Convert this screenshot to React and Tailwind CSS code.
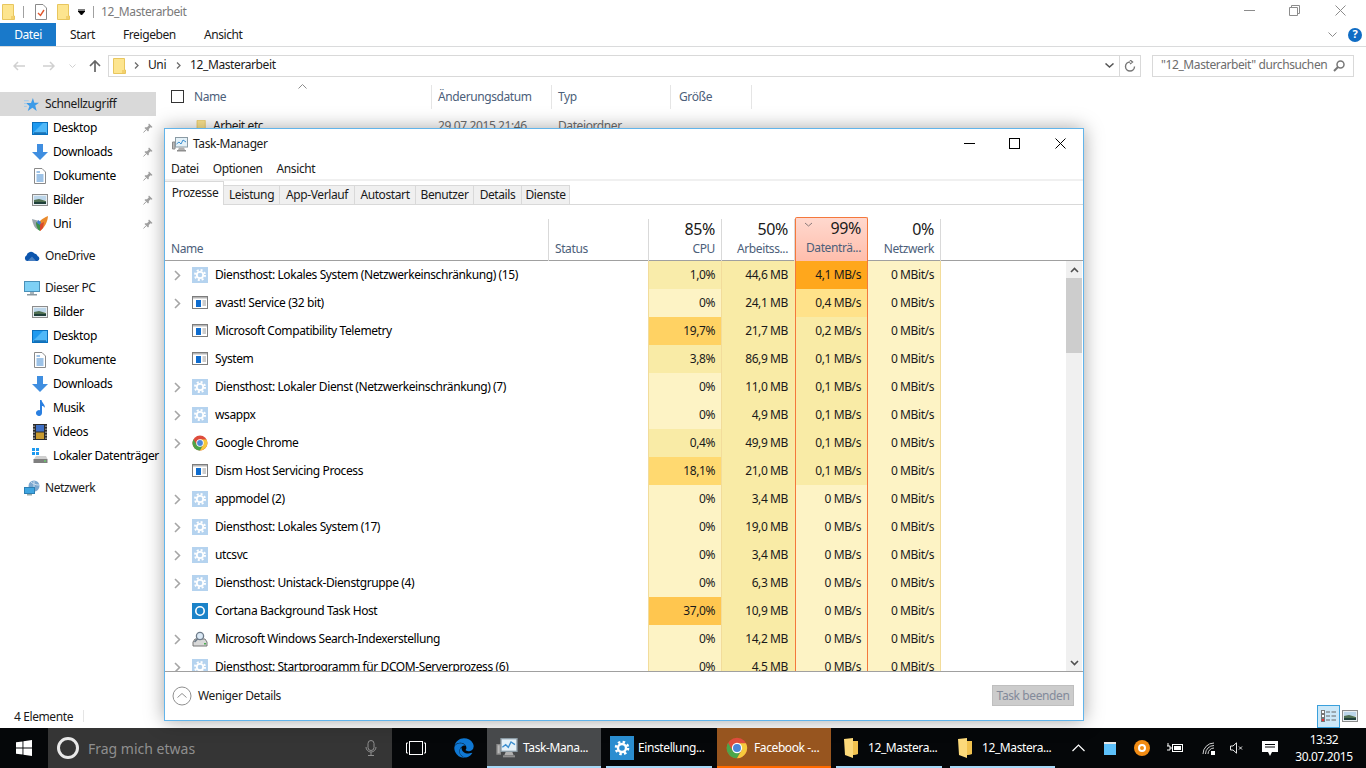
import { FaEdge } from "react-icons/fa";

const FolderIcon = ({ className = "w-[13px] h-[16px]" }) => (
  <svg viewBox="0 0 13 16" className={className}>
    <path d="M0.5 0.5H11.5V12H12.5V15.5H0.5Z" fill="#fde58f" stroke="#e8c65e" />
    <rect x="9" y="12" width="3" height="3" fill="#f3d06c" />
  </svg>
);

const ChromeIcon = ({ size = 16 }) => (
  <svg viewBox="0 0 32 32" width={size} height={size}>
    <circle cx="16" cy="16" r="15" fill="#de4c3c" />
    <path d="M16 16L3 23.5A15 15 0 0 1 3 8.5L9 19Z" fill="#4aa64a" />
    <path d="M16 16L3 23.5A15 15 0 0 0 16 31L23 18Z" fill="#4aa64a" />
    <path d="M16 9H29A15 15 0 0 1 16 31L23 19Z" fill="#f6c93c" />
    <circle cx="16" cy="16" r="7.5" fill="#fff" />
    <circle cx="16" cy="16" r="5.8" fill="#4a86d8" />
  </svg>
);

const GearIcon = () => (
  <svg viewBox="0 0 16 16" className="w-4 h-4">
    <rect width="16" height="16" fill="#b5d3ef" />
    <circle cx="8" cy="8" r="5" fill="none" stroke="#fff" strokeWidth="2" strokeDasharray="2 1.93" />
    <circle cx="8" cy="8" r="3.2" fill="none" stroke="#fff" strokeWidth="1.8" />
  </svg>
);

const WindowIcon = () => (
  <svg viewBox="0 0 16 14" className="w-4 h-[14px]">
    <rect x="0.5" y="0.5" width="15" height="12" fill="#fff" stroke="#7d7d7d" />
    <rect x="1" y="1" width="14" height="1.5" fill="#b5b5b5" />
    <rect x="4" y="4" width="5" height="7" fill="#0e6ccf" />
    <path d="M10.5 5H14M10.5 7H14M10.5 9H14" stroke="#9a9a9a" />
  </svg>
);

const CortanaIcon = () => (
  <svg viewBox="0 0 16 16" className="w-4 h-4">
    <rect width="16" height="16" fill="#1b83c9" />
    <circle cx="8" cy="8" r="4.2" fill="none" stroke="#fff" strokeWidth="1.6" />
  </svg>
);

const SearchIndexIcon = () => (
  <svg viewBox="0 0 16 16" className="w-4 h-4">
    <path d="M1 11L3 8H13L15 11V15H1Z" fill="#d9d9d9" stroke="#777" />
    <rect x="12" y="12" width="2" height="1.5" fill="#4caf50" />
    <circle cx="8" cy="5" r="3.6" fill="#dbe9f5" stroke="#6c7a88" strokeWidth="1.3" />
    <path d="M5.5 8L2.5 11" stroke="#6c7a88" strokeWidth="1.6" />
  </svg>
);

const PinIcon = () => (
  <svg viewBox="0 0 10 10" className="w-[10px] h-[10px]">
    <path d="M6 0.5L9.5 4L8.5 4.7L7.6 4.2L5.8 6L5.8 7.8L5 8.5L1.5 5L2.2 4.2L4 4.2L5.8 2.4L5.3 1.5Z" fill="#a2a2a2" />
    <path d="M3 6.8L0.5 9.5" stroke="#a2a2a2" />
  </svg>
);

const DesktopIcon = () => (
  <svg viewBox="0 0 16 13" className="w-4 h-[13px]">
    <rect x="0.5" y="0.5" width="15" height="12" fill="#1e9af0" stroke="#0b6fbb" />
    <path d="M1 11L11 1H15V11Z" fill="#50b8f8" />
    <rect x="2" y="10.5" width="12" height="1" fill="#0b4f8a" />
  </svg>
);

const DownloadIcon = () => (
  <svg viewBox="0 0 16 16" className="w-4 h-4">
    <path d="M5 0H11V8H16L8 16L0 8H5Z" fill="#3f8ee0" />
  </svg>
);

const DocIcon = () => (
  <svg viewBox="0 0 12 16" className="w-3 h-4">
    <path d="M0.5 0.5H8L11.5 4V15.5H0.5Z" fill="#fff" stroke="#8a8a8a" />
    <path d="M2.5 4H6M2.5 7H9.5M2.5 9H9.5M2.5 11H9.5M2.5 13H9.5" stroke="#3d86cf" />
  </svg>
);

const PictureIcon = () => (
  <svg viewBox="0 0 16 12" className="w-4 h-3">
    <rect x="0.5" y="0.5" width="15" height="11" fill="#e8eef2" stroke="#8c8c8c" />
    <rect x="2" y="2" width="12" height="4" fill="#bcd6ea" />
    <path d="M2 6L7 5L14 7V10H2Z" fill="#4f6f52" />
    <rect x="2" y="8" width="12" height="2" fill="#1f3f3a" />
  </svg>
);

const UniIcon = () => (
  <svg viewBox="0 0 16 16" className="w-4 h-4">
    <path d="M0 3L7 5L7 14C3 13 1 9 0 3Z" fill="#9aa5ad" />
    <path d="M4 6L8 8L8 15C6 14 4 11 4 6Z" fill="#3f8f4a" />
    <path d="M16 0C15.5 6 13 11 8 15L8 5C10 3 13 1 16 0Z" fill="#e98a2c" />
    <path d="M8 8L12 6L11 12L8 15Z" fill="#d9482f" />
    <path d="M6 4L9 6L8 9L5 7Z" fill="#3c7fd0" />
  </svg>
);

const CloudIcon = () => (
  <svg viewBox="0 0 16 10" className="w-4 h-[10px]">
    <path d="M3 10A3 3 0 0 1 2.5 4.5A4.5 4.5 0 0 1 10.5 2.5A3.5 3.5 0 0 1 13.5 5A2.6 2.6 0 0 1 13.5 10Z" fill="#0c55ad" />
    <path d="M3.5 10L8 5.5L12 10" fill="#ffffff" opacity="0.25" />
  </svg>
);

const PcIcon = () => (
  <svg viewBox="0 0 16 15" className="w-4 h-[15px]">
    <rect x="0.5" y="0.5" width="15" height="10" fill="#7ed0f5" stroke="#4a90b8" />
    <rect x="6" y="11" width="4" height="2" fill="#a8b4bb" />
    <rect x="3" y="13" width="10" height="1.5" fill="#8a98a0" />
  </svg>
);

const MusicIcon = () => (
  <svg viewBox="0 0 12 16" className="w-3 h-4">
    <path d="M6 0H7.5C8 3 11 4 11 8C10 6.5 9 6 8 6V13A3 3 0 1 1 6 10.2Z" fill="#2a7fe0" />
  </svg>
);

const VideoIcon = () => (
  <svg viewBox="0 0 14 16" className="w-[14px] h-4">
    <rect width="14" height="16" fill="#2b2b2b" />
    <rect x="3" y="1" width="8" height="6.5" fill="#3f6fc4" />
    <rect x="3" y="8.5" width="8" height="6.5" fill="#c89a2e" />
    <path d="M1 1.5V15M13 1.5V15" stroke="#ddd" strokeWidth="1" strokeDasharray="1.5 1.5" />
  </svg>
);

const DriveIcon = () => (
  <svg viewBox="0 0 16 16" className="w-4 h-4">
    <rect x="0" y="0" width="3" height="3" fill="#1e9af0" />
    <rect x="4" y="0" width="3" height="3" fill="#1e9af0" />
    <rect x="0" y="4" width="3" height="3" fill="#1e9af0" />
    <rect x="4" y="4" width="3" height="3" fill="#1e9af0" />
    <path d="M2 11L4 8H14L15.5 11Z" fill="#cfcfcf" />
    <rect x="1.5" y="11" width="14" height="4" fill="#7f7f7f" />
    <rect x="12" y="12.5" width="2" height="1" fill="#5ff05f" />
  </svg>
);

const NetworkIcon = () => (
  <svg viewBox="0 0 16 16" className="w-4 h-4">
    <circle cx="10" cy="6" r="5.5" fill="#7ba7cf" />
    <path d="M7 2C9 4 12 5 15 5M10 1V11" stroke="#cfe0ee" fill="none" />
    <rect x="0.5" y="7.5" width="10" height="6" fill="#3fa5e0" stroke="#2d7fb3" />
    <rect x="3" y="14" width="5" height="1.5" fill="#9aa" />
  </svg>
);

const StarIcon = () => (
  <svg viewBox="0 0 16 16" className="w-[15px] h-[15px]">
    <path d="M9.5 1L11 6H16L12 9L13.5 15L9 11.5L4 15L5.8 9.5L2 6.5H7.5Z" fill="#3c9be8" />
    <path d="M0 4H5M0 7H3M0 10H3" stroke="#9cc9ee" />
  </svg>
);

const TaskMgrIcon = ({ className = "w-4 h-[15px]" }) => (
  <svg viewBox="0 0 16 15" className={className}>
    <path d="M0.5 5V12H3V5Z" fill="#b9b9b9" stroke="#8b8b8b" />
    <rect x="3.5" y="0.5" width="12" height="9.5" fill="#e4f1f8" stroke="#8a9aa4" />
    <path d="M4.5 7L7 5L9 7L11 3L14 5" fill="none" stroke="#3c8fd0" />
    <path d="M7 10.5H12L13 13H6Z" fill="#b0b0b0" />
    <rect x="5" y="13" width="9" height="1.5" fill="#8f8f8f" />
  </svg>
);

const Chevron = () => (
  <svg viewBox="0 0 7 11" className="w-[7px] h-[11px]">
    <path d="M1 1L5.5 5.5L1 10" fill="none" stroke="#a6a6a6" strokeWidth="1.6" />
  </svg>
);

const Chevron2 = () => (
  <svg viewBox="0 0 5 7" className="w-[5px] h-[7px] inline-block">
    <path d="M1 0.5L4 3.5L1 6.5" fill="none" stroke="#6d6d6d" strokeWidth="1.3" />
  </svg>
);

const sideTop = [
  { label: "Desktop", icon: <DesktopIcon /> },
  { label: "Downloads", icon: <DownloadIcon /> },
  { label: "Dokumente", icon: <DocIcon /> },
  { label: "Bilder", icon: <PictureIcon /> },
  { label: "Uni", icon: <UniIcon /> },
];

const sidePc = [
  { label: "Bilder", icon: <PictureIcon /> },
  { label: "Desktop", icon: <DesktopIcon /> },
  { label: "Dokumente", icon: <DocIcon /> },
  { label: "Downloads", icon: <DownloadIcon /> },
  { label: "Musik", icon: <MusicIcon /> },
  { label: "Videos", icon: <VideoIcon /> },
  { label: "Lokaler Datenträger", icon: <DriveIcon /> },
];

const SideItem = ({ label, icon, pin }) => (
  <div className="h-6 flex items-center pl-[32px]">
    <div className="w-[16px] flex justify-center shrink-0">{icon}</div>
    <span className="ml-[5px] whitespace-nowrap text-[#000]">{label}</span>
    {pin && (
      <span className="ml-auto mr-[3px]">
        <PinIcon />
      </span>
    )}
  </div>
);

const SideRoot = ({ label, icon, active }) => (
  <div className={`h-6 flex items-center ${active ? "bg-[#d9d9d9]" : ""}`}>
    <div className="w-[45px] pl-[24px] flex">{icon}</div>
    <span className="whitespace-nowrap">{label}</span>
  </div>
);

const processes = [
  { name: "Diensthost: Lokales System (Netzwerkeinschränkung) (15)", icon: "gear", exp: true, cpu: "1,0%", cpuBg: "bg-[#f9ecaa]", mem: "44,6 MB", disk: "4,1 MB/s", diskBg: "bg-[#ffa71c]" },
  { name: "avast! Service (32 bit)", icon: "win", exp: true, cpu: "0%", cpuBg: "bg-[#fdf3c5]", mem: "24,1 MB", disk: "0,4 MB/s", diskBg: "bg-[#ffe28a]" },
  { name: "Microsoft Compatibility Telemetry", icon: "win", cpu: "19,7%", cpuBg: "bg-[#ffd263]", mem: "21,7 MB", disk: "0,2 MB/s", diskBg: "bg-[#f9eba6]" },
  { name: "System", icon: "win", cpu: "3,8%", cpuBg: "bg-[#f9eba6]", mem: "86,9 MB", disk: "0,1 MB/s", diskBg: "bg-[#f9eba6]" },
  { name: "Diensthost: Lokaler Dienst (Netzwerkeinschränkung) (7)", icon: "gear", exp: true, cpu: "0%", cpuBg: "bg-[#fdf3c5]", mem: "11,0 MB", disk: "0,1 MB/s", diskBg: "bg-[#f9eba6]" },
  { name: "wsappx", icon: "gear", exp: true, cpu: "0%", cpuBg: "bg-[#fdf3c5]", mem: "4,9 MB", disk: "0,1 MB/s", diskBg: "bg-[#f9eba6]" },
  { name: "Google Chrome", icon: "chrome", exp: true, cpu: "0,4%", cpuBg: "bg-[#f9eba6]", mem: "49,9 MB", disk: "0,1 MB/s", diskBg: "bg-[#f9eba6]" },
  { name: "Dism Host Servicing Process", icon: "win", cpu: "18,1%", cpuBg: "bg-[#ffd970]", mem: "21,0 MB", disk: "0,1 MB/s", diskBg: "bg-[#f9eba6]" },
  { name: "appmodel (2)", icon: "gear", exp: true, cpu: "0%", cpuBg: "bg-[#fdf3c5]", mem: "3,4 MB", disk: "0 MB/s", diskBg: "bg-[#fdf3c5]" },
  { name: "Diensthost: Lokales System (17)", icon: "gear", exp: true, cpu: "0%", cpuBg: "bg-[#fdf3c5]", mem: "19,0 MB", disk: "0 MB/s", diskBg: "bg-[#fdf3c5]" },
  { name: "utcsvc", icon: "gear", exp: true, cpu: "0%", cpuBg: "bg-[#fdf3c5]", mem: "3,4 MB", disk: "0 MB/s", diskBg: "bg-[#fdf3c5]" },
  { name: "Diensthost: Unistack-Dienstgruppe (4)", icon: "gear", exp: true, cpu: "0%", cpuBg: "bg-[#fdf3c5]", mem: "6,3 MB", disk: "0 MB/s", diskBg: "bg-[#fdf3c5]" },
  { name: "Cortana Background Task Host", icon: "cortana", cpu: "37,0%", cpuBg: "bg-[#ffc64f]", mem: "10,9 MB", disk: "0 MB/s", diskBg: "bg-[#fdf3c5]" },
  { name: "Microsoft Windows Search-Indexerstellung", icon: "search", exp: true, cpu: "0%", cpuBg: "bg-[#fdf3c5]", mem: "14,2 MB", disk: "0 MB/s", diskBg: "bg-[#fdf3c5]" },
  { name: "Diensthost: Startprogramm für DCOM-Serverprozess (6)", icon: "gear", exp: true, cpu: "0%", cpuBg: "bg-[#fdf3c5]", mem: "4,5 MB", disk: "0 MB/s", diskBg: "bg-[#fdf3c5]" },
];

const procIcons = {
  gear: <GearIcon />,
  win: <WindowIcon />,
  chrome: <ChromeIcon />,
  cortana: <CortanaIcon />,
  search: <SearchIndexIcon />,
};

const tabs = [
  { label: "Leistung", w: "w-[56px]" },
  { label: "App-Verlauf", w: "w-[75px]" },
  { label: "Autostart", w: "w-[61px]" },
  { label: "Benutzer", w: "w-[58px]" },
  { label: "Details", w: "w-[48px]" },
  { label: "Dienste", w: "w-[48px]" },
];

const TableGrid = "grid grid-cols-[384px_100px_73px_73px_73px_73px]";

const HeadCol = ({ pct, label, hot }) => (
  <div
    className={`flex flex-col items-end pr-[6px] relative ${
      hot
        ? "bg-gradient-to-b from-[#ffd8ce] to-[#ffbeac] border border-b-0 border-[#f4783c] rounded-t-[2px] -mt-[2px] h-[44px]"
        : "h-full border-r border-[#d9d9d9]"
    }`}
  >
    {hot && (
      <svg viewBox="0 0 9 5" className="absolute left-[8px] top-[4px] w-[9px] h-[5px]">
        <path d="M1 1L4.5 4L8 1" fill="none" stroke="#8a7a7a" />
      </svg>
    )}
    <span className="text-[16px] leading-[20px] text-[#1a1a1a]">{pct}</span>
    <span className="text-[#4c607a] leading-[16px] mt-[2px] whitespace-nowrap">{label}</span>
  </div>
);

const TaskManager = () => (
  <div className="absolute left-[164px] top-[128px] w-[920px] h-[593px] bg-white border border-[#62b4ea] shadow-[0_0_18px_rgba(0,0,0,0.35)] flex flex-col">
    <div className="h-[30px] flex items-center pl-[7px] shrink-0">
      <TaskMgrIcon />
      <span className="ml-[5px] text-[#1a1a1a]">Task-Manager</span>
      <div className="ml-auto flex items-center pb-[2px]">
        <svg viewBox="0 0 11 11" className="w-[11px] h-[11px] mr-[34px]"><path d="M0 5.5H11" stroke="#000" /></svg>
        <svg viewBox="0 0 11 11" className="w-[11px] h-[11px] mr-[35px]"><rect x="0.5" y="0.5" width="10" height="10" fill="none" stroke="#000" /></svg>
        <svg viewBox="0 0 11 11" className="w-[11px] h-[11px] mr-[17px]"><path d="M0.5 0.5L10.5 10.5M10.5 0.5L0.5 10.5" stroke="#000" /></svg>
      </div>
    </div>
    <div className="h-[20px] flex items-center pl-[6px] gap-[14px] shrink-0 text-[#1a1a1a]">
      <span>Datei</span>
      <span>Optionen</span>
      <span>Ansicht</span>
    </div>
    <div className="h-[2px] bg-[#f0f0f0] shrink-0" />
    <div className="h-[24px] flex items-end border-b border-[#d9d9d9] shrink-0 relative">
      <div className="h-[24px] w-[59px] flex justify-center pt-[2px] pl-[2px] bg-white border-t border-r border-[#d9d9d9] relative top-px text-[#1a1a1a]">Prozesse</div>
      {tabs.map((t) => (
        <div key={t.label} className={`${t.w} h-[19px] flex items-center justify-center bg-[#f0f0f0] border-t border-r border-[#d9d9d9] text-[#1a1a1a]`}>{t.label}</div>
      ))}
    </div>
    <div className={`${TableGrid} h-[56px] pt-[14px] border-b border-[#a0a0a0] shrink-0`}>
      <div className="border-r border-[#d9d9d9] flex items-end pl-[6px] pb-[3px] text-[#4c607a]">Name</div>
      <div className="border-r border-[#d9d9d9] flex items-end pl-[6px] pb-[3px] text-[#4c607a]">Status</div>
      <HeadCol pct="85%" label="CPU" />
      <HeadCol pct="50%" label="Arbeitss..." />
      <HeadCol pct="99%" label="Datenträ..." hot />
      <HeadCol pct="0%" label="Netzwerk" />
    </div>
    <div className="h-[410px] flex overflow-hidden shrink-0 relative">
      <div className="flex-1 overflow-hidden">
        {processes.map((p) => (
          <div key={p.name} className={`${TableGrid} h-[28px] shrink-0`}>
            <div className="flex items-center text-[#000]">
              <div className="w-[27px] pl-[9px] flex">{p.exp && <Chevron />}</div>
              <div className="w-[16px] flex justify-center">{procIcons[p.icon]}</div>
              <span className="ml-[7px] whitespace-nowrap">{p.name}</span>
            </div>
            <div className="border-r border-[#f2dc9b]" />
            <div className={`${p.cpuBg} border-r border-[#f2dc9b] flex items-center justify-end pr-[6px]`}>{p.cpu}</div>
            <div className="bg-[#f9eba6] flex items-center justify-end pr-[7px]">{p.mem}</div>
            <div className={`${p.diskBg} border-x border-[#f4783c] flex items-center justify-end pr-[6px]`}>{p.disk}</div>
            <div className="bg-[#fdf3c5] border-r border-[#f2dc9b] flex items-center justify-end pr-[6px]">0 MBit/s</div>
          </div>
        ))}
      </div>
      <div className="w-[16px] mr-px bg-[#f0f0f0] flex flex-col shrink-0">
        <div className="h-[17px] flex items-center justify-center">
          <svg viewBox="0 0 9 6" className="w-[9px] h-[6px]"><path d="M1 5L4.5 1.5L8 5" fill="none" stroke="#505050" strokeWidth="1.6" /></svg>
        </div>
        <div className="h-[75px] bg-[#cdcdcd]" />
        <div className="flex-1" />
        <div className="h-[17px] flex items-center justify-center">
          <svg viewBox="0 0 9 6" className="w-[9px] h-[6px]"><path d="M1 1L4.5 4.5L8 1" fill="none" stroke="#505050" strokeWidth="1.6" /></svg>
        </div>
      </div>
    </div>
    <div className="flex-1 border-t border-[#a0a0a0] flex items-center pl-[7px] pr-[9px] pb-[1px]">
      <svg viewBox="0 0 20 20" className="w-5 h-5">
        <circle cx="10" cy="10" r="9" fill="none" stroke="#909090" />
        <path d="M5.5 11.5L10 7.5L14.5 11.5" fill="none" stroke="#909090" />
      </svg>
      <span className="ml-[6px] text-[#1a1a1a]">Weniger Details</span>
      <div className="ml-auto w-[82px] h-[21px] bg-[#cccccc] border border-[#bfbfbf] flex items-center justify-center text-[#838a9a]">Task beenden</div>
    </div>
  </div>
);

const Explorer = () => (
  <div className="flex-1 flex flex-col min-h-0">
    <div className="h-[23px] flex items-center pl-[2px] shrink-0">
      <FolderIcon />
      <div className="w-px h-[12px] bg-[#a0a0a0] ml-[8px]" />
      <svg viewBox="0 0 12 16" className="w-3 h-4 ml-[11px]">
        <path d="M0.5 0.5H8L11.5 4V15.5H0.5Z" fill="#fff" stroke="#8a8a8a" />
        <path d="M3 9L5.5 11.5L9 6" fill="none" stroke="#e0562c" strokeWidth="1.4" />
      </svg>
      <div className="ml-[10px]"><FolderIcon /></div>
      <svg viewBox="0 0 7 6" className="w-[7px] h-[6px] ml-[8px]"><path d="M0 0H7M0 2L3.5 6L7 2Z" stroke="#000" fill="#000" strokeWidth="1" /></svg>
      <div className="w-px h-[12px] bg-[#a0a0a0] ml-[8px]" />
      <span className="ml-[7px] text-[#7a7a7a]">12_Masterarbeit</span>
      <div className="ml-auto flex items-center pb-[2px]">
        <svg viewBox="0 0 11 11" className="w-[11px] h-[11px] mr-[34px]"><path d="M0 5.5H11" stroke="#8c8c8c" /></svg>
        <svg viewBox="0 0 11 11" className="w-[11px] h-[11px] mr-[35px]"><path d="M2.5 2.5V0.5H10.5V8.5H8.5M0.5 2.5H8.5V10.5H0.5Z" fill="none" stroke="#8c8c8c" /></svg>
        <svg viewBox="0 0 11 11" className="w-[11px] h-[11px] mr-[20px]"><path d="M0.5 0.5L10.5 10.5M10.5 0.5L0.5 10.5" stroke="#8c8c8c" /></svg>
      </div>
    </div>
    <div className="h-[24px] flex items-center border-b border-[#dadbdc] shrink-0">
      <div className="w-[56px] h-[23px] bg-[#1979ca] text-white flex items-center justify-center">Datei</div>
      <span className="ml-[14px]">Start</span>
      <span className="ml-[28px]">Freigeben</span>
      <span className="ml-[28px]">Ansicht</span>
      <svg viewBox="0 0 9 5" className="w-[9px] h-[5px] ml-auto"><path d="M0.5 0.5L4.5 4.5L8.5 0.5" fill="none" stroke="#8c8c8c" /></svg>
      <div className="w-[14px] h-[14px] rounded-full bg-[#0f6cc4] text-white flex items-center justify-center text-[11px] font-bold ml-[11px] mr-[4px]">?</div>
    </div>
    <div className="h-[37px] flex items-center shrink-0">
      <svg viewBox="0 0 12 10" className="w-3 h-[10px] ml-[13px]"><path d="M12 5H1M5 1L1 5L5 9" fill="none" stroke="#d0d0d0" strokeWidth="1.5" /></svg>
      <svg viewBox="0 0 12 10" className="w-3 h-[10px] ml-[18px]"><path d="M0 5H11M7 1L11 5L7 9" fill="none" stroke="#d0d0d0" strokeWidth="1.5" /></svg>
      <svg viewBox="0 0 7 4" className="w-[7px] h-1 ml-[14px]"><path d="M0.5 0.5L3.5 3.5L6.5 0.5" fill="none" stroke="#d0d0d0" /></svg>
      <svg viewBox="0 0 12 12" className="w-3 h-3 ml-[13px]"><path d="M6 12V1.5M1 6L6 1L11 6" fill="none" stroke="#666" strokeWidth="1.7" /></svg>
      <div className="ml-[7px] w-[1033px] h-[22px] border border-[#d9d9d9] flex items-center pl-[4px]">
        <FolderIcon />
        <span className="ml-[8px] flex"><Chevron2 /></span>
        <span className="ml-[9px] pb-[2px]">Uni</span>
        <span className="ml-[10px] flex"><Chevron2 /></span>
        <span className="ml-[9px] pb-[2px]">12_Masterarbeit</span>
        <svg viewBox="0 0 9 5" className="w-[9px] h-[5px] ml-auto mr-[5px]"><path d="M0.5 0.5L4.5 4L8.5 0.5" fill="none" stroke="#555" strokeWidth="1.5" /></svg>
        <div className="w-[21px] h-full border-l border-[#d9d9d9] flex items-center justify-center">
          <svg viewBox="0 0 12 12" className="w-3 h-3"><path d="M6 2A4.5 4.5 0 1 0 10.5 6.5M6 0L8.5 2L6 4" fill="none" stroke="#777" strokeWidth="1.4" /></svg>
        </div>
      </div>
      <div className="ml-[11px] w-[202px] h-[22px] border border-[#d9d9d9] flex items-center pl-[8px] text-[#6d6d6d]">
        <span className="whitespace-nowrap pb-[2px]">"12_Masterarbeit" durchsuchen</span>
        <svg viewBox="0 0 12 12" className="w-3 h-3 ml-auto mr-[8px]"><circle cx="7.5" cy="4.5" r="3.5" fill="none" stroke="#777" strokeWidth="1.5" /><path d="M5 7L1 11" stroke="#777" strokeWidth="2" /></svg>
      </div>
    </div>
    <div className="flex-1 flex min-h-0">
      <div className="w-[156px] pt-[8px] shrink-0 flex flex-col">
        <SideRoot label="Schnellzugriff" icon={<StarIcon />} active />
        {sideTop.map((s) => (
          <SideItem key={s.label} {...s} pin />
        ))}
        <div className="mt-[8px]"><SideRoot label="OneDrive" icon={<CloudIcon />} /></div>
        <div className="mt-[8px]"><SideRoot label="Dieser PC" icon={<PcIcon />} /></div>
        {sidePc.map((s) => (
          <SideItem key={s.label} {...s} />
        ))}
        <div className="mt-[8px]"><SideRoot label="Netzwerk" icon={<NetworkIcon />} /></div>
      </div>
      <div className="flex-1 flex flex-col pl-[15px]">
        <div className="h-[25px] flex items-center relative text-[#4c607a]">
          <span className="w-[13px] h-[13px] border border-[#333] shrink-0" />
          <span className="ml-[10px] w-[237px]">Name</span>
          <div className="w-px h-[24px] bg-[#e5e5e5]" />
          <span className="w-[119px] pl-[6px]">Änderungsdatum</span>
          <div className="w-px h-[24px] bg-[#e5e5e5]" />
          <span className="w-[118px] pl-[6px]">Typ</span>
          <div className="w-px h-[24px] bg-[#e5e5e5]" />
          <span className="w-[80px] pl-[8px]">Größe</span>
          <div className="w-px h-[24px] bg-[#e5e5e5]" />
          <svg viewBox="0 0 9 5" className="absolute left-[127px] top-0 w-[9px] h-[5px]"><path d="M0.5 4.5L4.5 0.5L8.5 4.5" fill="none" stroke="#8c8c8c" /></svg>
        </div>
        <div className="h-[22px] mt-[6px] flex items-center">
          <div className="w-[23px] ml-[24px]"><FolderIcon className="w-[13px] h-[12px]" /></div>
          <span className="w-[225px] -ml-[5px]">Arbeit etc</span>
          <span className="w-[120px] text-[#6d6d6d]">29.07.2015 21:46</span>
          <span className="text-[#6d6d6d]">Dateiordner</span>
        </div>
        <div className="flex-1" />
      </div>
    </div>
    <div className="h-[24px] flex items-center pl-[14px] shrink-0 relative">
      <span className="text-[#1a1a1a] pt-[2px]">4 Elemente</span>
      <div className="w-px h-[12px] bg-[#e5e5e5] ml-[10px]" />
      <div className="ml-auto w-[23px] h-[23px] bg-[#cce8f8] border border-[#3aa0dc] flex items-center justify-center">
        <svg viewBox="0 0 15 13" className="w-[15px] h-[13px]">
          <rect x="0.5" y="0.5" width="3" height="3" fill="#fff" stroke="#777" />
          <rect x="0.5" y="4.5" width="3" height="3" fill="#fff" stroke="#777" />
          <rect x="0.5" y="8.5" width="3" height="3" fill="#e33" stroke="#777" />
          <path d="M5 2H9M10.5 2H15M5 6H9M10.5 6H15M5 10H9M10.5 10H15" stroke="#666" />
        </svg>
      </div>
      <div className="ml-[2px] mr-[8px]"><PictureIcon /></div>
    </div>
  </div>
);

const TaskButton = ({ label, icon, className, under, gap = "ml-[6px]" }) => (
  <div className={`h-full flex items-center relative shrink-0 ${className}`}>
    {icon}
    <span className={`${gap} text-white whitespace-nowrap`}>{label}</span>
    <div className={`absolute left-0 right-0 bottom-0 h-[2px] ${under}`} />
  </div>
);

const TaskFolder = () => (
  <svg viewBox="0 0 14 20" className="w-[14px] h-5">
    <path d="M0 1L9 0V3H14V16L9 17V20L1 17Z" fill="#fcd97a" />
    <path d="M9 3V17L14 16V3Z" fill="#f1c24f" />
  </svg>
);

const Taskbar = () => (
  <div className="h-[40px] bg-[#050709] flex items-stretch shrink-0">
    <div className="w-[48px] flex items-center justify-center">
      <svg viewBox="0 0 16 16" className="w-4 h-4">
        <path d="M0 2.3L6.5 1.4V7.5H0ZM7.4 1.3L16 0V7.5H7.4ZM0 8.5H6.5V14.6L0 13.7ZM7.4 8.5H16V16L7.4 14.7Z" fill="#fff" />
      </svg>
    </div>
    <div className="w-[344px] bg-[#353535] flex items-center pl-[9px]">
      <div className="w-[22px] h-[22px] rounded-full border-[3px] border-[#e8e8e8]" />
      <span className="ml-[9px] text-[#8f8f8f] text-[14px] tracking-normal">Frag mich etwas</span>
      <svg viewBox="0 0 12 16" className="w-3 h-4 ml-auto mr-[15px]">
        <rect x="3" y="0.5" width="6" height="10" rx="3" fill="none" stroke="#8f8f8f" />
        <path d="M1 7A5 5 0 0 0 11 7M6 12V15M3 15.5H9" fill="none" stroke="#8f8f8f" />
      </svg>
    </div>
    <div className="w-[48px] flex items-center justify-center">
      <svg viewBox="0 0 20 14" className="w-5 h-[14px]">
        <rect x="3.5" y="0.5" width="13" height="13" fill="none" stroke="#fff" />
        <path d="M2 2H0.5V12H2M18 2H19.5V12H18" fill="none" stroke="#fff" />
      </svg>
    </div>
    <div className="w-[47px] flex items-center justify-center">
      <FaEdge className="w-5 h-5 text-[#0f78d4]" />
    </div>
    <TaskButton label="Task-Mana..." under="bg-[#a6d8f7]" className="w-[114px] bg-[#47494b] pl-[9px] ml-0" gap="ml-[5px]" icon={<TaskMgrIcon className="w-[22px] h-5" />} />
    <TaskButton label="Einstellung..." under="bg-[#a6d8f7]" className="w-[106px] ml-[5px] pl-[4px]" gap="ml-[4px]" icon={
      <svg viewBox="0 0 24 24" className="w-6 h-6">
        <rect width="24" height="24" fill="#2a8dd0" />
        <circle cx="12" cy="12" r="6" fill="none" stroke="#fff" strokeWidth="2.6" strokeDasharray="2.4 2.3" />
        <circle cx="12" cy="12" r="4" fill="none" stroke="#fff" strokeWidth="2.4" />
      </svg>
    } />
    <TaskButton label="Facebook -..." under="bg-[#ff6a00]" className="w-[114px] ml-[5px] bg-[#97551f] pl-[9px]" icon={<ChromeIcon size={22} />} />
    <TaskButton label="12_Mastera..." under="bg-[#a6d8f7]" className="w-[106px] ml-[5px] pl-[8px]" gap="ml-[10px]" icon={<TaskFolder />} />
    <TaskButton label="12_Mastera..." under="bg-[#a6d8f7]" className="w-[105px] ml-[8px] pl-[8px]" gap="ml-[10px]" icon={<TaskFolder />} />
    <div className="flex-1 flex items-center relative">
      <svg viewBox="0 0 13 8" className="w-[13px] h-2 ml-[17px]"><path d="M0.5 7L6.5 1L12.5 7" fill="none" stroke="#fff" strokeWidth="1.2" /></svg>
      <svg viewBox="0 0 12 13" className="w-3 h-[13px] ml-[19px]"><rect width="12" height="13" fill="#5cc0fa" /><rect width="12" height="2" fill="#e5e5e5" /></svg>
      <div className="ml-[18px] w-4 h-4 rounded-full bg-[#f28c14] flex items-center justify-center">
        <div className="w-2 h-2 rounded-full border-2 border-white" />
      </div>
      <svg viewBox="0 0 16 10" className="w-4 h-[10px] ml-[17px]">
        <rect x="5.5" y="1.5" width="10" height="7" fill="none" stroke="#fff" />
        <rect x="7" y="3" width="7" height="4" fill="#fff" />
        <path d="M0 3H3V7H0M1 0V3M3 5H5" fill="none" stroke="#fff" />
      </svg>
      <svg viewBox="0 0 13 13" className="w-[13px] h-[13px] ml-[19px]">
        <path d="M1 12A11 11 0 0 1 12 1M3.5 12A8.5 8.5 0 0 1 12 3.5M6 12A6 6 0 0 1 12 6" fill="none" stroke="#d0d0d0" />
        <rect x="9" y="9" width="4" height="4" fill="#fff" />
      </svg>
      <svg viewBox="0 0 14 12" className="w-[14px] h-3 ml-[15px]">
        <path d="M0.5 4H3L6.5 0.8V11.2L3 8H0.5Z" fill="none" stroke="#e5e5e5" />
        <path d="M9 4.5L12 7.5M12 4.5L9 7.5" stroke="#e5e5e5" />
      </svg>
      <svg viewBox="0 0 16 15" className="w-4 h-[15px] ml-[18px]">
        <path d="M0 0H16V11H10L8 15L6 11H0Z" fill="#fff" />
        <path d="M3 3.5H13M3 6H13" stroke="#050709" />
      </svg>
      <div className="ml-auto mr-[10px] w-[64px] flex flex-col items-center text-white leading-[17px]">
        <span>13:32</span>
        <span>30.07.2015</span>
      </div>
    </div>
  </div>
);

export default function App() {
  return (
    <div className="w-[1366px] h-[768px] relative overflow-hidden flex flex-col bg-white text-[12px] tracking-[-0.4px] text-[#1a1a1a] font-['Noto_Sans','Open_Sans',sans-serif]">
      <Explorer />
      <TaskManager />
      <Taskbar />
    </div>
  );
}
